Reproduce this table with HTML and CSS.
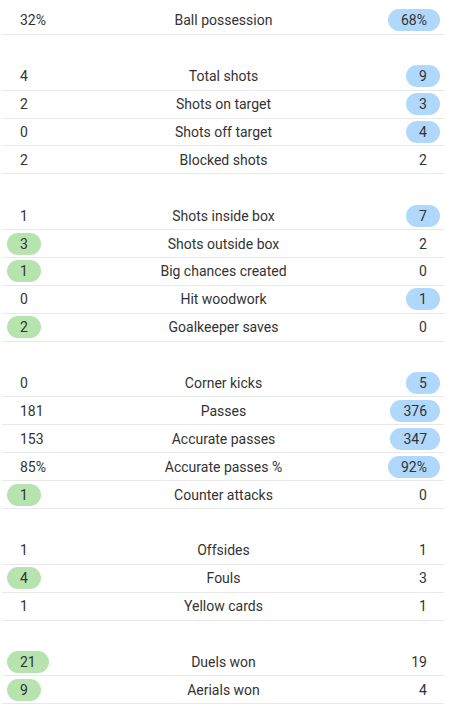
FILE: index.html
```html
<!DOCTYPE html>
<html lang="en">
<head>
    <meta charset="UTF-8">
    <meta name="viewport" content="width=device-width, initial-scale=1.0">
    <title>Match statistics</title>
    <link rel="stylesheet" href="styles.css">
</head>
<body>
    <div class="stats">
        <!-- Possession -->
        <div class="group">
            <div class="row"><span class="val">32%</span><span class="label">Ball possession</span><span class="val away win">68%</span></div>
        </div>

        <!-- Shots -->
        <div class="group">
            <div class="row"><span class="val">4</span><span class="label">Total shots</span><span class="val away win">9</span></div>
            <div class="row"><span class="val">2</span><span class="label">Shots on target</span><span class="val away win">3</span></div>
            <div class="row"><span class="val">0</span><span class="label">Shots off target</span><span class="val away win">4</span></div>
            <div class="row"><span class="val">2</span><span class="label">Blocked shots</span><span class="val away">2</span></div>
        </div>

        <div class="group">
            <div class="row"><span class="val">1</span><span class="label">Shots inside box</span><span class="val away win">7</span></div>
            <div class="row"><span class="val home win">3</span><span class="label">Shots outside box</span><span class="val away">2</span></div>
            <div class="row"><span class="val home win">1</span><span class="label">Big chances created</span><span class="val away">0</span></div>
            <div class="row"><span class="val">0</span><span class="label">Hit woodwork</span><span class="val away win">1</span></div>
            <div class="row"><span class="val home win">2</span><span class="label">Goalkeeper saves</span><span class="val away">0</span></div>
        </div>

        <!-- Passing -->
        <div class="group">
            <div class="row"><span class="val">0</span><span class="label">Corner kicks</span><span class="val away win">5</span></div>
            <div class="row"><span class="val">181</span><span class="label">Passes</span><span class="val away win">376</span></div>
            <div class="row"><span class="val">153</span><span class="label">Accurate passes</span><span class="val away win">347</span></div>
            <div class="row"><span class="val">85%</span><span class="label">Accurate passes %</span><span class="val away win">92%</span></div>
            <div class="row"><span class="val home win">1</span><span class="label">Counter attacks</span><span class="val away">0</span></div>
        </div>

        <!-- Discipline -->
        <div class="group">
            <div class="row"><span class="val">1</span><span class="label">Offsides</span><span class="val away">1</span></div>
            <div class="row"><span class="val home win">4</span><span class="label">Fouls</span><span class="val away">3</span></div>
            <div class="row"><span class="val">1</span><span class="label">Yellow cards</span><span class="val away">1</span></div>
        </div>

        <!-- Duels -->
        <div class="group">
            <div class="row"><span class="val home win">21</span><span class="label">Duels won</span><span class="val away">19</span></div>
            <div class="row"><span class="val home win">9</span><span class="label">Aerials won</span><span class="val away">4</span></div>
        </div>
    </div>
</body>
</html>
```

FILE: styles.css
```css
body {
    margin: 0;
    padding: 0;
    background-color: white;
    color: #333;
    font-family: Roboto, 'Noto Sans', sans-serif;
    font-size: 14px;
}

.stats {
    padding: 7px 6px 0 2px;
}

.group {
    margin-bottom: 27.9px;
}

.row {
    display: grid;
    grid-template-columns: 1fr auto 1fr;
    align-items: center;
    height: 27.9px;
    box-sizing: border-box;
    padding: 0 4px 0 5px;
    border-bottom: 1px solid #e9e9e9;
}

.label {
    text-align: center;
}

.val {
    justify-self: start;
    min-width: 8px;
    height: 22px;
    line-height: 22px;
    padding: 0 13px;
    border-radius: 11px;
    text-align: center;
}

.val.away {
    justify-self: end;
}

.val.home.win {
    background: #b7e3af;
}

.val.away.win {
    background: #b0d8fc;
}
```
